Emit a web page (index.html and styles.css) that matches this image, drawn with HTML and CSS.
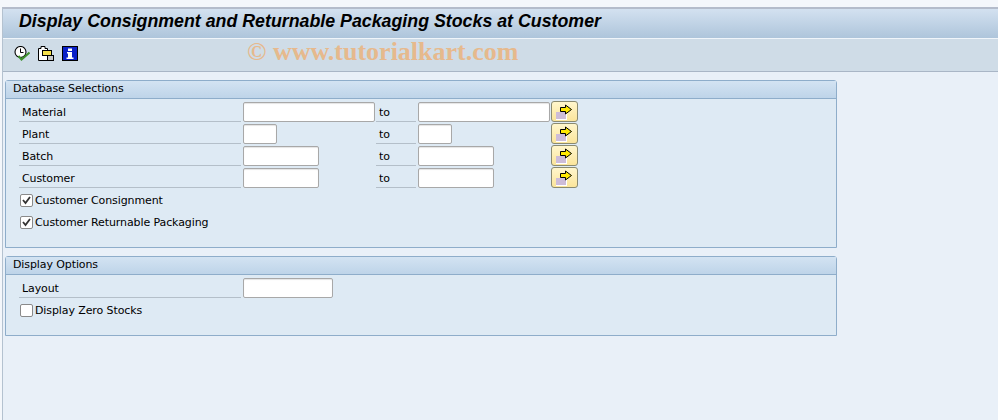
FILE: index.html
```html
<!DOCTYPE html>
<html lang="en">
<head>
  <meta charset="UTF-8" />
  <title>Display Consignment and Returnable Packaging Stocks at Customer</title>
  <link rel="stylesheet" href="styles.css">
</head>
<body>
  <div class="window">
    <div class="title-bar">
      <h1>Display Consignment and Returnable Packaging Stocks at Customer</h1>
    </div>

    <div class="toolbar">
      <svg class="tool-icon" viewBox="0 0 16 16">
        <circle cx="6.5" cy="6" r="5.5" fill="#fff" stroke="#000" stroke-width="1.1"/>
        <path d="M6.5 2.5V6.5H9.5" fill="none" stroke="#000"/>
        <path d="M4.5 10L7.5 13.5L15.5 6.5" fill="none" stroke="#3d8f2c" stroke-width="2"/>
      </svg>
      <svg class="tool-icon" viewBox="0 0 16 16">
        <path d="M0.5 2.5H3V0.5H7V2.5H9.5V14.5H0.5Z" fill="#fff" stroke="#000"/>
        <rect x="4.5" y="4.5" width="9" height="5" fill="#f5e04a" stroke="#000"/>
        <rect x="9.5" y="9.5" width="6" height="5" fill="#c8c8c8" stroke="#000"/>
      </svg>
      <svg class="tool-icon" viewBox="0 0 16 16">
        <rect x="0.5" y="0.5" width="15" height="14" fill="#0a20c8" stroke="#000"/>
        <rect x="6" y="2.5" width="4" height="2.5" fill="#fff"/>
        <path d="M5 6H10V11.5H11.5V13H4.5V11.5H6V7.5H5Z" fill="#fff"/>
      </svg>
      <span class="watermark">© www.tutorialkart.com</span>
    </div>

    <div class="content">
      <section class="group group-db">
        <div class="group-title">Database Selections</div>
        <div class="group-body">
          <div class="row">
            <label>Material</label>
            <input class="f-lg" type="text">
            <span class="to">to</span>
            <input class="f-lg" type="text">
            <button class="more"><svg viewBox="0 0 19 18"><rect x="1" y="9" width="11" height="8" fill="#fff"/><rect x="1" y="9" width="10" height="7" fill="#cdbcd8"/><path d="M5.5 4.5H10.5V2L16.5 6.5L10.5 11V8.5H5.5Z" fill="#ffe800" stroke="#000"/></svg></button>
          </div>
          <div class="row">
            <label>Plant</label>
            <input class="f-sm" type="text">
            <span class="to">to</span>
            <input class="f-sm" type="text">
            <button class="more"><svg viewBox="0 0 19 18"><rect x="1" y="9" width="11" height="8" fill="#fff"/><rect x="1" y="9" width="10" height="7" fill="#cdbcd8"/><path d="M5.5 4.5H10.5V2L16.5 6.5L10.5 11V8.5H5.5Z" fill="#ffe800" stroke="#000"/></svg></button>
          </div>
          <div class="row">
            <label>Batch</label>
            <input class="f-md" type="text">
            <span class="to">to</span>
            <input class="f-md" type="text">
            <button class="more"><svg viewBox="0 0 19 18"><rect x="1" y="9" width="11" height="8" fill="#fff"/><rect x="1" y="9" width="10" height="7" fill="#cdbcd8"/><path d="M5.5 4.5H10.5V2L16.5 6.5L10.5 11V8.5H5.5Z" fill="#ffe800" stroke="#000"/></svg></button>
          </div>
          <div class="row">
            <label>Customer</label>
            <input class="f-md" type="text">
            <span class="to">to</span>
            <input class="f-md" type="text">
            <button class="more"><svg viewBox="0 0 19 18"><rect x="1" y="9" width="11" height="8" fill="#fff"/><rect x="1" y="9" width="10" height="7" fill="#cdbcd8"/><path d="M5.5 4.5H10.5V2L16.5 6.5L10.5 11V8.5H5.5Z" fill="#ffe800" stroke="#000"/></svg></button>
          </div>
          <div class="check-row">
            <span class="check"><svg viewBox="0 0 11 11"><path d="M2 5L4.5 8L9 2" fill="none" stroke="#333" stroke-width="1.8"/></svg></span>Customer Consignment
          </div>
          <div class="check-row">
            <span class="check"><svg viewBox="0 0 11 11"><path d="M2 5L4.5 8L9 2" fill="none" stroke="#333" stroke-width="1.8"/></svg></span>Customer Returnable Packaging
          </div>
        </div>
      </section>

      <section class="group group-display">
        <div class="group-title">Display Options</div>
        <div class="group-body">
          <div class="row">
            <label>Layout</label>
            <input class="f-layout" type="text">
          </div>
          <div class="check-row"><span class="check"></span>Display Zero Stocks</div>
        </div>
      </section>
    </div>
  </div>
</body>
</html>
```

FILE: styles.css
```css
html, body {
  margin: 0;
  padding: 0;
  height: 100%;
  overflow: hidden;
}
body {
  background-color: #f4f7fb;
  font-family: "DejaVu Sans", sans-serif;
  font-size: 11px;
  letter-spacing: -0.1px;
  color: #000;
}
.window {
  margin: 7px 0 0 2px;
  height: 413px;
  border-top: 2px solid #b4bccb;
  border-left: 1px solid #b4c2d0;
  box-sizing: border-box;
  background-color: #e9f0f8;
}
.title-bar {
  height: 29px;
  padding-left: 16px;
  background: linear-gradient(#d3e1f0, #aec5db);
  border-bottom: 1px solid #f0f5fa;
}
.title-bar h1 {
  margin: 0;
  font-family: "Liberation Sans", sans-serif;
  font-size: 17.8px;
  font-style: italic;
  font-weight: bold;
  letter-spacing: 0;
  line-height: 25px;
  white-space: nowrap;
}
.toolbar {
  height: 33px;
  padding: 0 0 3px 11px;
  box-sizing: border-box;
  display: flex;
  align-items: center;
  background-color: #cfdce7;
  border-bottom: 1px solid #a9b6c6;
}
.tool-icon {
  width: 16px;
  height: 16px;
  margin-right: 8px;
}
.watermark {
  align-self: flex-start;
  margin-left: 161px;
  font-family: "Liberation Serif", serif;
  font-size: 26px;
  font-weight: bold;
  letter-spacing: 0;
  line-height: 26px;
  color: #e6b98d;
  white-space: nowrap;
}
.content {
  padding: 8px 0 0 2px;
}
.group {
  width: 832px;
  box-sizing: border-box;
  border: 1px solid #8eadca;
  border-top-left-radius: 3px;
  border-top-right-radius: 3px;
  background-color: #deeaf4;
}
.group-db {
  height: 168px;
  margin-bottom: 8px;
}
.group-display {
  height: 80px;
}
.group-title {
  height: 18px;
  padding-left: 7px;
  box-sizing: border-box;
  line-height: 15px;
  background: linear-gradient(#d3e3f2, #bed4e9);
  border-bottom: 1px solid #8eadca;
}
.group-body {
  padding: 3px 0 0 13px;
}
.row {
  display: grid;
  grid-template-columns: 224px 133px 42px 133px 27px;
  height: 22px;
}
.row label {
  width: 222px;
  height: 20px;
  padding-left: 3px;
  box-sizing: border-box;
  line-height: 21px;
  border-bottom: 1px solid #b4bfc9;
}
.row input {
  height: 20px;
  box-sizing: border-box;
  margin: 0;
  padding: 0;
  border: 1px solid #a8a8a8;
  border-radius: 2px;
  background-color: #fff;
  box-shadow: inset 0 1px 1px #e4e4e4;
}
.f-lg { width: 132px; }
.f-md { width: 76px; }
.f-sm { width: 34px; }
.f-layout { width: 90px; }
.to {
  width: 40px;
  height: 20px;
  padding-left: 3px;
  box-sizing: border-box;
  line-height: 21px;
  border-bottom: 1px solid #b4bfc9;
}
.more {
  width: 27px;
  height: 21px;
  margin: -1px 0 0;
  padding: 0;
  display: flex;
  align-items: center;
  justify-content: center;
  border: 1px solid #8a8a70;
  border-radius: 3px;
  background: linear-gradient(#fff6cc, #fbe59b);
}
.more svg {
  width: 19px;
  height: 18px;
}
.check-row {
  height: 22px;
  padding-left: 1px;
  display: flex;
  align-items: center;
}
.row + .check-row {
  margin-top: -1px;
}
.check {
  width: 13px;
  height: 13px;
  margin-right: 2px;
  box-sizing: border-box;
  border: 1px solid #8a8a8a;
  border-radius: 2px;
  background-color: #fff;
}
.check svg {
  display: block;
  width: 11px;
  height: 11px;
}
```
